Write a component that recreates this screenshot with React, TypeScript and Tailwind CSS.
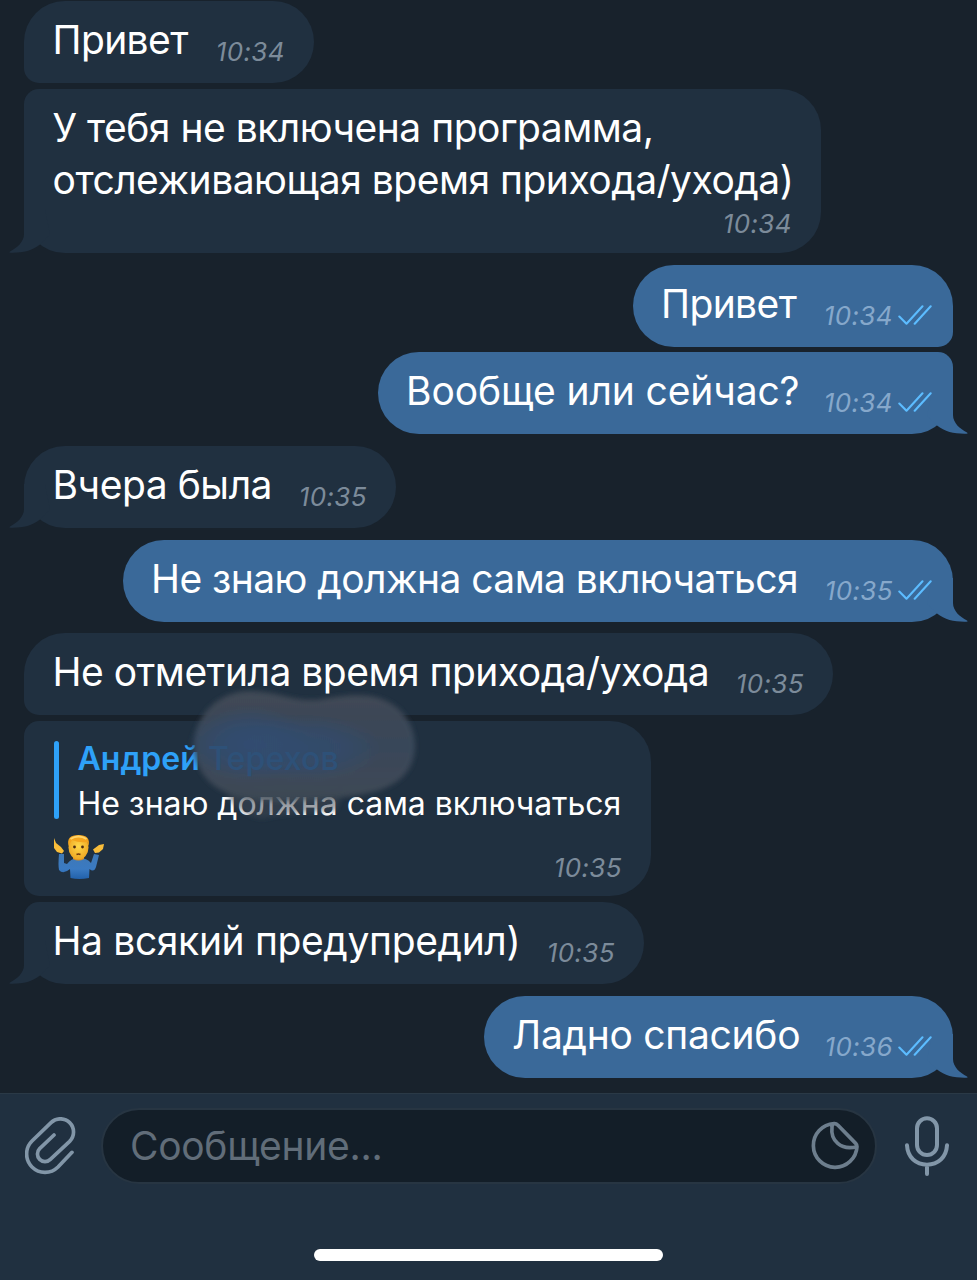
import React from "react";
import clsx from "clsx";

type Message = {
  text: string[];
  time: string;
  out?: boolean;
  tail?: boolean;
  // size, outer margin and corners of the bubble
  box: string;
  tracking?: string;
  reply?: boolean;
};

const messages: Message[] = [
  { text: ["Привет"], time: "10:34", box: "mt-px w-[290px] h-[82px] rounded-[41px] rounded-bl-[15px]", tracking: "tracking-[-0.6px]" },
  {
    text: ["У тебя не включена программа,", "отслеживающая время прихода/ухода)"],
    time: "10:34",
    tail: true,
    box: "mt-[6px] w-[797px] h-[164px] rounded-[41px] rounded-tl-[15px]",
    tracking: "tracking-[-0.5px]",
  },
  { text: ["Привет"], time: "10:34", out: true, box: "mt-[12px] w-[320px] h-[82px] rounded-[41px] rounded-br-[15px]", tracking: "tracking-[-0.6px]" },
  { text: ["Вообще или сейчас?"], time: "10:34", out: true, tail: true, box: "mt-[5px] w-[575px] h-[82px] rounded-[41px] rounded-tr-[15px]", tracking: "tracking-[-0.12px]" },
  { text: ["Вчера была"], time: "10:35", tail: true, box: "mt-[12px] w-[372px] h-[82px] rounded-[41px]", tracking: "tracking-[-0.45px]" },
  { text: ["Не знаю должна сама включаться"], time: "10:35", out: true, tail: true, box: "mt-[12px] w-[830px] h-[82px] rounded-[41px]", tracking: "tracking-[-0.56px]" },
  { text: ["Не отметила время прихода/ухода"], time: "10:35", box: "mt-[11px] w-[809px] h-[82px] rounded-[41px] rounded-bl-[15px]", tracking: "tracking-[-0.5px]" },
  { text: [], time: "10:35", reply: true, box: "mt-[6px] w-[627px] h-[175px] rounded-[41px] rounded-l-[15px]" },
  { text: ["На всякий предупредил)"], time: "10:35", tail: true, box: "mt-[6px] w-[620px] h-[82px] rounded-[41px] rounded-tl-[15px]", tracking: "tracking-[-0.36px]" },
  { text: ["Ладно спасибо"], time: "10:36", out: true, tail: true, box: "mt-[12px] w-[469px] h-[82px] rounded-[41px]", tracking: "tracking-[-0.28px]" },
];

const Tail: React.FC<{ out?: boolean }> = ({ out }) => (
  <svg
    className={clsx("absolute bottom-0 h-[44px] w-[42px]", out ? "-right-[15px] -scale-x-100 text-[#3a6999]" : "-left-[15px] text-[#203040]")}
    viewBox="0 0 42 44"
    fill="currentColor"
  >
    <path d="M15 0V25C15 33 8 39 1 42.4Q-.5 43.6 1.500 43.700C13 44 23 42 31 35.500L41 26L36 0Z" />
  </svg>
);

const Checks: React.FC = () => (
  <svg className="ml-[5px] mt-[5px] h-[20px] w-[34px] text-[#5cbcff]" viewBox="0 0 34 20" fill="none" stroke="currentColor" strokeWidth="2.1" strokeLinecap="round" strokeLinejoin="round">
    <path d="M1.300 11.500L8.500 18.700L24.500 1.300M16.700 18.700L32.700 1.300" />
  </svg>
);

const Time: React.FC<{ time: string; out?: boolean }> = ({ time, out }) => (
  <div className={clsx("flex shrink-0 text-[26px] leading-[32px] tracking-[0.4px] italic", out ? "text-[#86a8cb]" : "text-[#7c8b9a]")}>
    <span>{time}</span>
    {out && <Checks />}
  </div>
);

const Shrug: React.FC = () => (
  <svg className="h-[46px] w-[52px]" viewBox="0 0 52 46">
    <defs>
      <linearGradient id="shirt" x1="0" y1="0" x2="0" y2="1">
        <stop offset="0" stopColor="#3f78b5" />
        <stop offset=".6" stopColor="#3a7ac2" />
        <stop offset="1" stopColor="#2261ab" />
      </linearGradient>
      <radialGradient id="skin" cx=".5" cy=".45" r=".6">
        <stop offset="0" stopColor="#ffd84a" />
        <stop offset="1" stopColor="#eda320" />
      </radialGradient>
    </defs>
    <path d="M6 20Q5 31 6 36Q10 41 17 35L17.500 44Q26 46 36 44L36.500 35Q41 39 43 33L46 21L41 20L38 29Q34 24 26 24Q18 24 14 30L11 29L11 20Z" fill="url(#shirt)" />
    <path d="M1 4L3 9L8 13L11 17L9 19.500L4 18L1 14Z" fill="#f9bd3a" />
    <path d="M51 10L46 11L40 15.500L42 19L46 18.500L50 15Z" fill="#f9bd3a" />
    <path d="M20 21h11v4q-5.500 3-11 0z" fill="#dd9020" />
    <ellipse cx="25.500" cy="13.500" rx="10" ry="12" fill="url(#skin)" />
    <path d="M15.500 12Q13 1 25.500 1Q38 1 35.500 12L34 8Q26 9 19 6Z" fill="#f5a51d" />
    <path d="M17.500 5Q25.500 0 33.500 5" stroke="#ffd46a" strokeWidth="2" fill="none" />
    <circle cx="21.500" cy="13" r="1.400" fill="#4b2b12" />
    <circle cx="29.500" cy="13" r="1.400" fill="#4b2b12" />
    <path d="M23.500 20.500q2-1 4 0" stroke="#71390c" strokeWidth="1.500" fill="none" />
  </svg>
);

const Smudge: React.FC = () => (
  <svg className="absolute left-[127px] -top-[62px] h-[150px] w-[250px]" viewBox="180 679 250 150">
    <defs>
      <filter id="soft" x="-10%" y="-10%" width="120%" height="120%">
        <feGaussianBlur stdDeviation="2.500" />
      </filter>
      <linearGradient id="smoke" x1="0" y1="0" x2="0" y2="1">
        <stop offset="0" stopColor="#424b56" />
        <stop offset=".25" stopColor="#3e4958" />
        <stop offset=".5" stopColor="#39495b" />
        <stop offset=".75" stopColor="#3f4a59" />
        <stop offset="1" stopColor="#48515c" stopOpacity=".75" />
      </linearGradient>
      <radialGradient id="glow">
        <stop offset="0" stopColor="#304c70" />
        <stop offset=".5" stopColor="#304c70" stopOpacity=".75" />
        <stop offset="1" stopColor="#304c70" stopOpacity="0" />
      </radialGradient>
    </defs>
    <g filter="url(#soft)">
      <path d="M194 741C197 712 221 691 250 691C275 691 291 701 316 700C340 696 355 694 370 696C397 700 415 721 415 745C415 768 402 783 377 791C351 798 338 797 319 799C287 803 251 803 225 792C203 782 193 762 194 741Z" fill="url(#smoke)" fillOpacity=".95" />
      <path d="M225 785Q280 797 345 789L336 811Q285 813 262 819Q243 816 229 799Z" fill="#3b4753" fillOpacity=".5" />
      <ellipse cx="250" cy="744" rx="62" ry="38" fill="url(#glow)" />
      <ellipse cx="305" cy="748" rx="75" ry="34" fill="url(#glow)" fillOpacity=".8" />
    </g>
  </svg>
);

const ReplyBody: React.FC = () => (
  <div className="flex w-full flex-col pt-[20px]">
    <div className="relative flex h-[78px]">
      <div className="ml-px w-[5px] shrink-0 rounded-full bg-[#2ea1f8]" />
      <div className="ml-[19px] flex flex-col whitespace-nowrap text-[32px] leading-[45px]">
        <p className="-mt-[5px] font-semibold text-[#2ea1f8]">
          Андрей <span className="relative z-20 font-medium tracking-[0.2px] text-[#2e5178]">Терехов</span>
        </p>
        <p className="tracking-[-0.03px] text-white">Не знаю должна сама включаться</p>
      </div>
      <Smudge />
    </div>
    <div className="flex justify-between pt-[15px]">
      <Shrug />
      <div className="pt-[18px]">
        <Time time="10:35" />
      </div>
    </div>
  </div>
);

const Bubble: React.FC<{ message: Message }> = ({ message }) => {
  const { text, time, out, tail, box, tracking, reply } = message;
  const multiline = text.length > 1;
  return (
    <div
      className={clsx(
        "relative flex shrink-0",
        box,
        out ? "self-end bg-[#3a6999] pl-[28px] pr-[21px]" : "self-start bg-[#203040] pl-[28.5px] pr-[29px]",
        multiline ? "flex-col" : "justify-between"
      )}
    >
      {tail && <Tail out={out} />}
      {reply ? (
        <ReplyBody />
      ) : (
        <>
          <div className={clsx("relative whitespace-nowrap pt-[13px] text-[39px] leading-[52px] text-white", tracking)}>
            {text.map((line) => (
              <p key={line}>{line}</p>
            ))}
          </div>
          <div className={clsx("relative", multiline ? "mt-[2px] self-end" : "pt-[35px]")}>
            <Time time={time} out={out} />
          </div>
        </>
      )}
    </div>
  );
};

const InputBar: React.FC = () => (
  <footer className="flex h-[187px] shrink-0 flex-col items-center border-t border-[#2a3946] bg-[#203040] text-[#8296a8]">
    <div className="flex w-full items-center pl-[25px] pr-[28px] pt-[14px]">
      <svg className="h-[58px] w-[51px]" viewBox="75 97 153 174" fill="none" stroke="currentColor" strokeWidth="11" strokeLinecap="round" strokeLinejoin="round">
        <path d="M216 203L174 247A55 55 0 0 1 96 169L153 114A39 39 0 0 1 209 170L151 224A22 22 0 0 1 119 192L162 151" />
      </svg>
      <div className="ml-[25px] flex h-[76px] w-[776px] items-center justify-between rounded-full border-2 border-[#273542] bg-[#131e28] pl-[27px] pr-[15px]">
        <span className="-mt-px text-[39px] leading-[52px] tracking-[-0.3px] text-[#616d79]">Сообщение...</span>
        <svg className="h-[50px] w-[50px]" viewBox="91 107 150 150" fill="none" stroke="#6d7e8d" strokeWidth="11" strokeLinecap="round" strokeLinejoin="round">
          <path d="M163 115A65.500 65.500 0 1 0 232 184Q232 178 228 174L175 120Q169 114 163 115Q157 116 157 125C152 165 183 197 232 184" />
        </svg>
      </div>
      <svg className="ml-[28px] h-[60px] w-[44px]" viewBox="374 94 132 180" fill="none" stroke="currentColor" strokeWidth="12" strokeLinecap="round">
        <rect x="410" y="101" width="60" height="110" rx="30" />
        <path d="M380 182C382 218 407 240 440 240C473 240 498 218 500 182M440 240V268" />
      </svg>
    </div>
    <div className="mt-[65px] h-[12px] w-[349px] rounded-full bg-white" />
  </footer>
);

const App: React.FC = () => {
  return (
    <div className="flex h-[1280px] w-[977px] flex-col overflow-hidden bg-[#18222c] font-['Inter',sans-serif]">
      <main className="flex grow flex-col px-[24px]">
        {messages.map((message, i) => (
          <Bubble key={i} message={message} />
        ))}
      </main>
      <InputBar />
    </div>
  );
};

export default App;
